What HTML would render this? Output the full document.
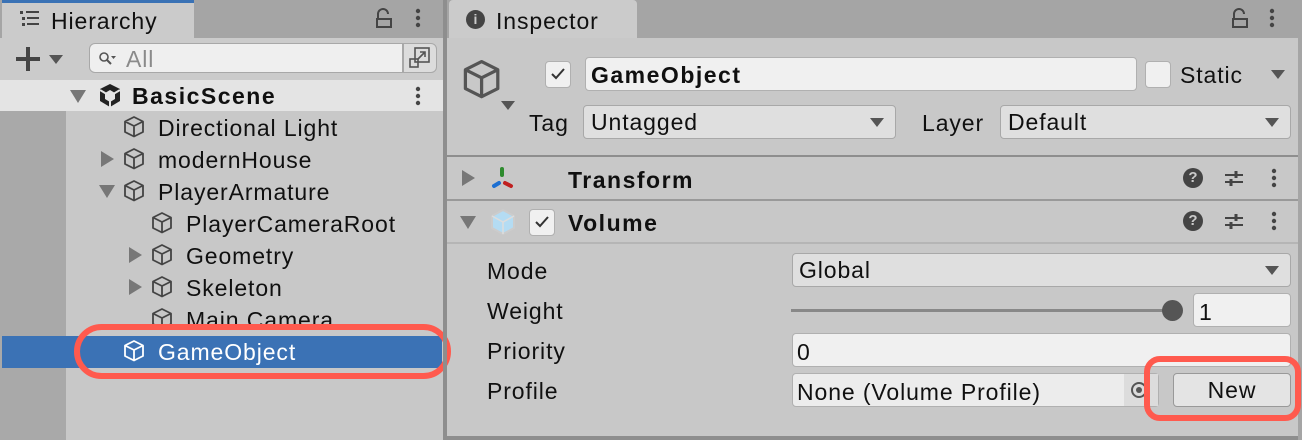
<!DOCTYPE html>
<html><head><style>
*{box-sizing:border-box;margin:0;padding:0}
body{width:1302px;height:440px;overflow:hidden;background:#c8c8c8;font-family:"Liberation Sans",sans-serif;color:#101010;position:relative}
.a{position:absolute}
.t{position:absolute;font-size:23px;line-height:32px;white-space:nowrap;letter-spacing:0.9px}
.t b,.b{font-weight:bold;letter-spacing:1.5px}
.fld{position:absolute;background:#dfdfdf;border:1px solid #a8a8a8;border-radius:4px}
.wf{position:absolute;background:#f0f0f0;border:1px solid #b0b0b0;border-radius:4px}
.dd{position:absolute;width:0;height:0;border-left:7px solid transparent;border-right:7px solid transparent;border-top:9px solid #555}
.tri{position:absolute;width:0;height:0;border-top:8px solid transparent;border-bottom:8px solid transparent;border-left:13px solid #777}
.trd{position:absolute;width:0;height:0;border-left:8px solid transparent;border-right:8px solid transparent;border-top:13px solid #777}
</style></head><body>
<svg width="0" height="0" style="position:absolute"><defs>
<g id="cube"><path d="M12 2 L21 6.5 V17 L12 21.5 L3 17 V6.5 Z M3 6.5 L12 11 L21 6.5 M12 11 V21.5" fill="none" stroke-width="1.8" stroke-linejoin="round"/></g>
</defs></svg>
<!-- Hierarchy tab bar -->
<div class="a" style="left:0;top:0;width:445px;height:38px;background:#a5a5a5"></div>
<div class="a" style="left:2px;top:0;width:192px;height:38px;background:#cbcbcb;border-top:3px solid #3a72b5"></div>
<div class="a" style="left:20px;top:10px;width:20px;height:16px">
<div class="a" style="left:0;top:1px;width:3px;height:3px;background:#444"></div><div class="a" style="left:6px;top:1px;width:13px;height:2px;background:#444"></div>
<div class="a" style="left:2px;top:7px;width:3px;height:3px;background:#444"></div><div class="a" style="left:7px;top:7px;width:12px;height:2px;background:#444"></div>
<div class="a" style="left:2px;top:13px;width:3px;height:3px;background:#444"></div><div class="a" style="left:7px;top:13px;width:12px;height:2px;background:#444"></div></div>
<div class="t" style="left:51px;top:5px">Hierarchy</div>
<svg class="a" style="left:374px;top:8px" width="20" height="22"><path d="M4 10 V6 a5 5 0 0 1 10 0" fill="none" stroke="#444" stroke-width="2"/><rect x="3" y="11" width="14" height="8" fill="none" stroke="#444" stroke-width="2"/></svg>
<svg class="a" style="left:412px;top:8px" width="12" height="22"><circle cx="6" cy="3" r="2.2" fill="#444"/><circle cx="6" cy="10" r="2.2" fill="#444"/><circle cx="6" cy="17" r="2.2" fill="#444"/></svg>
<!-- toolbar -->
<div class="a" style="left:0;top:38px;width:445px;height:42px;background:#cbcbcb"></div>
<div class="a" style="left:16px;top:57px;width:24px;height:4px;background:#444"></div>
<div class="a" style="left:26px;top:47px;width:4px;height:24px;background:#444"></div>
<div class="dd" style="left:49px;top:55px"></div>
<div class="a" style="left:89px;top:43px;width:314px;height:30px;background:#efefef;border:1px solid #a8a8a8;border-radius:6px 0 0 6px"></div>
<svg class="a" style="left:98px;top:51px" width="20" height="16"><circle cx="6" cy="6" r="4" fill="none" stroke="#555" stroke-width="1.6"/><path d="M9 9 L13 13" stroke="#555" stroke-width="2"/><path d="M13 5 h5 l-2.5 3z" fill="#555"/></svg>
<div class="t" style="left:126px;top:43px;color:#8a8a8a">All</div>
<div class="a" style="left:403px;top:43px;width:34px;height:30px;background:#dcdcdc;border:1px solid #a8a8a8;border-radius:0 6px 6px 0"></div>
<svg class="a" style="left:407px;top:46px" width="26" height="24"><rect x="8" y="2" width="14" height="14" fill="none" stroke="#555" stroke-width="1.6"/><rect x="3" y="13" width="8" height="8" fill="none" stroke="#555" stroke-width="1.6"/><path d="M11 13 L18 6 M13 6 h5 v5" fill="none" stroke="#555" stroke-width="1.6"/></svg>
<!-- tree -->
<div class="a" style="left:0;top:111px;width:66px;height:329px;background:#a9a9a9"></div>
<div class="a" style="left:0;top:80px;width:445px;height:31px;background:#e4e4e4"></div>
<div class="trd" style="left:70px;top:90px"></div>
<svg class="a" style="left:97px;top:82px" width="26" height="28"><path d="M13 2 L23 7 V19 L13 25 L3 19 V7 Z" fill="#222"/><path d="M13 8 L18 11 V17 L13 20 L8 17 V11Z" fill="#e4e4e4"/><path d="M13 14 V25 M3 8 L13 14 L23 8" stroke="#e4e4e4" stroke-width="2" fill="none"/></svg>
<div class="t b" style="left:132px;top:80px">BasicScene</div>
<svg class="a" style="left:412px;top:86px" width="12" height="22"><circle cx="6" cy="3" r="2.2" fill="#444"/><circle cx="6" cy="10" r="2.2" fill="#444"/><circle cx="6" cy="17" r="2.2" fill="#444"/></svg>

<svg class="a" style="left:122px;top:115px" width="26" height="25" stroke="#444"><use href="#cube"/></svg><div class="t" style="left:158px;top:112px">Directional Light</div>
<div class="tri" style="left:101px;top:151px"></div>
<svg class="a" style="left:122px;top:147px" width="26" height="25" stroke="#444"><use href="#cube"/></svg><div class="t" style="left:158px;top:144px">modernHouse</div>
<div class="trd" style="left:99px;top:185px"></div>
<svg class="a" style="left:122px;top:179px" width="26" height="25" stroke="#444"><use href="#cube"/></svg><div class="t" style="left:158px;top:176px">PlayerArmature</div>
<svg class="a" style="left:150px;top:211px" width="26" height="25" stroke="#444"><use href="#cube"/></svg><div class="t" style="left:186px;top:208px">PlayerCameraRoot</div>
<div class="tri" style="left:129px;top:247px"></div>
<svg class="a" style="left:150px;top:243px" width="26" height="25" stroke="#444"><use href="#cube"/></svg><div class="t" style="left:186px;top:240px">Geometry</div>
<div class="tri" style="left:129px;top:279px"></div>
<svg class="a" style="left:150px;top:275px" width="26" height="25" stroke="#444"><use href="#cube"/></svg><div class="t" style="left:186px;top:272px">Skeleton</div>
<svg class="a" style="left:150px;top:307px" width="26" height="25" stroke="#444"><use href="#cube"/></svg><div class="t" style="left:186px;top:304px">Main Camera</div>
<div class="a" style="left:2px;top:336px;width:440px;height:32px;background:#3b72b5"></div>
<svg class="a" style="left:122px;top:339px" width="26" height="25" stroke="#fff"><use href="#cube"/></svg><div class="t" style="left:158px;top:336px;color:#fff">GameObject</div>
<div class="a" style="left:74px;top:324px;width:377px;height:55px;border:6px solid #ff5a4e;border-radius:30px"></div>
<div class="a" style="left:443px;top:0;width:4px;height:440px;background:#8e8e8e"></div>
<!-- Inspector -->
<div class="a" style="left:447px;top:0;width:855px;height:38px;background:#a5a5a5"></div>
<div class="a" style="left:449px;top:0;width:188px;height:38px;background:#cbcbcb;border-radius:4px 4px 0 0"></div>
<div class="a" style="left:466px;top:10px;width:19px;height:19px;border-radius:50%;background:#444;color:#cbcbcb;font-size:14px;font-weight:bold;text-align:center;line-height:19px">i</div>
<div class="t" style="left:496px;top:5px">Inspector</div>
<svg class="a" style="left:1230px;top:8px" width="20" height="22"><path d="M4 10 V6 a5 5 0 0 1 10 0" fill="none" stroke="#444" stroke-width="2"/><rect x="3" y="11" width="14" height="8" fill="none" stroke="#444" stroke-width="2"/></svg>
<svg class="a" style="left:1266px;top:8px" width="12" height="22"><circle cx="6" cy="3" r="2.2" fill="#444"/><circle cx="6" cy="10" r="2.2" fill="#444"/><circle cx="6" cy="17" r="2.2" fill="#444"/></svg>
<div class="a" style="left:1298px;top:38px;width:4px;height:402px;background:#a5a5a5"></div>
<svg class="a" style="left:460px;top:58px" width="44" height="46" stroke="#555"><g transform="scale(1.8)"><use href="#cube" style="stroke-width:1.2"/></g></svg>
<div class="dd" style="left:501px;top:101px"></div>
<div class="wf" style="left:545px;top:61px;width:26px;height:27px"></div>
<svg class="a" style="left:549px;top:65px" width="18" height="18"><path d="M3 9 L7 13 L15 4" fill="none" stroke="#333" stroke-width="2"/></svg>
<div class="wf" style="left:585px;top:57px;width:552px;height:34px"></div>
<div class="t b" style="left:591px;top:59px">GameObject</div>
<div class="wf" style="left:1145px;top:61px;width:26px;height:27px"></div>
<div class="t" style="left:1180px;top:59px">Static</div>
<div class="dd" style="left:1271px;top:70px"></div>
<div class="t" style="left:529px;top:107px">Tag</div>
<div class="fld" style="left:583px;top:105px;width:313px;height:34px"></div>
<div class="t" style="left:591px;top:106px">Untagged</div>
<div class="dd" style="left:870px;top:118px"></div>
<div class="t" style="left:922px;top:107px">Layer</div>
<div class="fld" style="left:1000px;top:105px;width:291px;height:34px"></div>
<div class="t" style="left:1008px;top:106px">Default</div>
<div class="dd" style="left:1265px;top:118px"></div>
<div class="a" style="left:447px;top:155px;width:851px;height:2px;background:#8e8e8e"></div>
<div class="tri" style="left:462px;top:170px"></div>
<svg class="a" style="left:490px;top:165px" width="28" height="26" stroke-linecap="round" stroke-width="4"><path d="M12 4 V10" stroke="#2e8b2e"/><path d="M4 21 L9 18" stroke="#1d6fd1"/><path d="M15 18 L21 21" stroke="#c02020"/></svg>
<div class="t b" style="left:568px;top:164px">Transform</div>
<div class="a" style="left:447px;top:199px;width:851px;height:2px;background:#999"></div>
<div class="trd" style="left:460px;top:216px"></div>
<svg class="a" style="left:489px;top:208px" width="28" height="28"><path d="M14 2 L25 8 V20 L14 26 L3 20 V8Z" fill="#b4dcf3" stroke="#ccc" stroke-width="2"/><path d="M3 8 L14 14 L25 8 M14 14 V26" stroke="#ddd" stroke-width="1.5" fill="none"/></svg>
<div class="wf" style="left:529px;top:209px;width:26px;height:27px"></div>
<svg class="a" style="left:533px;top:213px" width="18" height="18"><path d="M3 9 L7 13 L15 4" fill="none" stroke="#333" stroke-width="2"/></svg>
<div class="t b" style="left:568px;top:207px">Volume</div>
<div class="a" style="left:447px;top:242px;width:851px;height:2px;background:#b5b5b5"></div>
<!-- header icons -->
<div class="a" style="left:1183px;top:168px;width:20px;height:20px;border-radius:50%;background:#444;color:#cbcbcb;font-size:15px;font-weight:bold;text-align:center;line-height:20px">?</div>
<div class="a" style="left:1183px;top:211px;width:20px;height:20px;border-radius:50%;background:#444;color:#cbcbcb;font-size:15px;font-weight:bold;text-align:center;line-height:20px">?</div>
<svg class="a" style="left:1223px;top:167px" width="22" height="22" stroke="#444" stroke-width="2"><path d="M2 8 H20 M2 15 H20"/><path d="M13 4 V11 M8 12 V19" stroke-width="3"/></svg>
<svg class="a" style="left:1223px;top:210px" width="22" height="22" stroke="#444" stroke-width="2"><path d="M2 8 H20 M2 15 H20"/><path d="M13 4 V11 M8 12 V19" stroke-width="3"/></svg>
<svg class="a" style="left:1268px;top:168px" width="12" height="22"><circle cx="6" cy="3" r="2.2" fill="#444"/><circle cx="6" cy="10" r="2.2" fill="#444"/><circle cx="6" cy="17" r="2.2" fill="#444"/></svg>
<svg class="a" style="left:1268px;top:211px" width="12" height="22"><circle cx="6" cy="3" r="2.2" fill="#444"/><circle cx="6" cy="10" r="2.2" fill="#444"/><circle cx="6" cy="17" r="2.2" fill="#444"/></svg>
<!-- properties -->
<div class="t" style="left:487px;top:255px">Mode</div>
<div class="t" style="left:487px;top:295px">Weight</div>
<div class="t" style="left:487px;top:335px">Priority</div>
<div class="t" style="left:487px;top:375px">Profile</div>
<div class="fld" style="left:792px;top:253px;width:499px;height:34px"></div>
<div class="t" style="left:799px;top:254px">Global</div>
<div class="dd" style="left:1265px;top:266px"></div>
<div class="a" style="left:791px;top:309px;width:380px;height:3px;background:#888"></div>
<div class="a" style="left:1162px;top:300px;width:21px;height:21px;border-radius:50%;background:#555"></div>
<div class="wf" style="left:1193px;top:293px;width:98px;height:34px"></div>
<div class="t" style="left:1199px;top:296px">1</div>
<div class="wf" style="left:792px;top:333px;width:499px;height:34px"></div>
<div class="t" style="left:797px;top:336px">0</div>
<div class="wf" style="left:792px;top:373px;width:367px;height:34px;background:#ececec"></div>
<div class="a" style="left:1124px;top:374px;width:34px;height:32px;background:#dcdcdc"></div>
<div class="a" style="left:1131px;top:382px;width:16px;height:16px;border-radius:50%;border:2px solid #555"></div>
<div class="a" style="left:1136px;top:387px;width:6px;height:6px;border-radius:50%;background:#555"></div>
<div class="t" style="left:797px;top:376px">None (Volume Profile)</div>
<div class="a" style="left:1173px;top:373px;width:118px;height:34px;background:#e4e4e4;border:1px solid #999;border-radius:4px;font-size:23px;line-height:32px;text-align:center;letter-spacing:0.9px">New</div>
<div class="a" style="left:1144px;top:356px;width:157px;height:65px;border:6px solid #ff5a4e;border-radius:16px"></div>
<div class="a" style="left:447px;top:436px;width:851px;height:4px;background:#8e8e8e"></div>
</body></html>
